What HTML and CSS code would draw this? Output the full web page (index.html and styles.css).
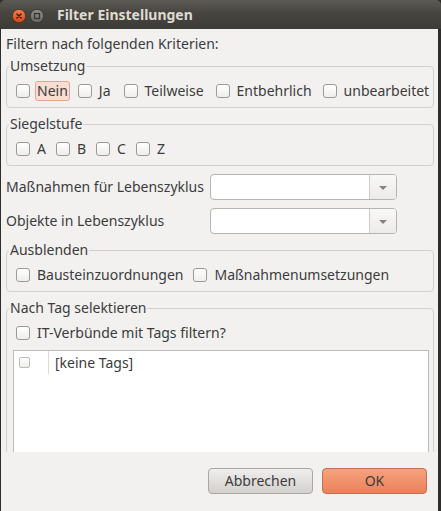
FILE: index.html
```html
<!DOCTYPE html>
<html lang="de">
<head>
<meta charset="utf-8">
<title>Filter Einstellungen</title>
<link rel="stylesheet" href="styles.css">
</head>
<body>
<div class="window">
  <div class="titlebar">
    <svg class="wbtn" width="14" height="14" viewBox="0 0 14 14">
      <defs><linearGradient id="og" x1="0" y1="0" x2="0" y2="1"><stop offset="0" stop-color="#f6814c"/><stop offset="1" stop-color="#d8461a"/></linearGradient></defs>
      <circle cx="7" cy="7" r="6.6" fill="url(#og)" stroke="#4a2a1a" stroke-width="0.7"/>
      <path d="M4.9 4.9 L9.1 9.1 M9.1 4.9 L4.9 9.1" stroke="#3a1a0c" stroke-width="1.4" stroke-linecap="round"/>
    </svg>
    <svg class="wbtn" width="14" height="14" viewBox="0 0 14 14">
      <defs><linearGradient id="gg" x1="0" y1="0" x2="0" y2="1"><stop offset="0" stop-color="#908e89"/><stop offset="1" stop-color="#6a6864"/></linearGradient></defs>
      <circle cx="7" cy="7" r="6.6" fill="url(#gg)" stroke="#2f2e2b" stroke-width="0.7"/>
      <rect x="4.5" y="4.5" width="5" height="5" fill="none" stroke="#33322f" stroke-width="1.2"/>
    </svg>
    <span class="title">Filter Einstellungen</span>
  </div>
  <div class="body">
    <div class="content">
      <div class="intro">Filtern nach folgenden Kriterien:</div>

      <fieldset class="frame f1">
        <legend>Umsetzung</legend>
        <div class="row wide">
          <div class="check"><span class="cb"></span><span class="lbl focus">Nein</span></div>
          <div class="check"><span class="cb"></span><span class="lbl">Ja</span></div>
          <div class="check"><span class="cb"></span><span class="lbl">Teilweise</span></div>
          <div class="check"><span class="cb"></span><span class="lbl">Entbehrlich</span></div>
          <div class="check"><span class="cb"></span><span class="lbl">unbearbeitet</span></div>
        </div>
      </fieldset>

      <fieldset class="frame">
        <legend>Siegelstufe</legend>
        <div class="row">
          <div class="check"><span class="cb"></span><span class="lbl">A</span></div>
          <div class="check"><span class="cb"></span><span class="lbl">B</span></div>
          <div class="check"><span class="cb"></span><span class="lbl">C</span></div>
          <div class="check"><span class="cb"></span><span class="lbl">Z</span></div>
        </div>
      </fieldset>

      <div class="combo-row first">
        <span class="combo-label">Maßnahmen für Lebenszyklus</span>
        <div class="combo"><span class="field"></span><span class="drop"><span class="arrow"></span></span></div>
      </div>
      <div class="combo-row">
        <span class="combo-label">Objekte in Lebenszyklus</span>
        <div class="combo"><span class="field"></span><span class="drop"><span class="arrow"></span></span></div>
      </div>

      <fieldset class="frame">
        <legend>Ausblenden</legend>
        <div class="row">
          <div class="check"><span class="cb"></span><span class="lbl">Bausteinzuordnungen</span></div>
          <div class="check"><span class="cb"></span><span class="lbl">Maßnahmenumsetzungen</span></div>
        </div>
      </fieldset>

      <fieldset class="frame tagframe">
        <legend>Nach Tag selektieren</legend>
        <div class="row">
          <div class="check"><span class="cb"></span><span class="lbl">IT-Verbünde mit Tags filtern?</span></div>
        </div>
        <div class="list">
          <div class="list-row">
            <div class="c1"><span class="cb small"></span></div>
            <div class="c2">[keine Tags]</div>
          </div>
        </div>
      </fieldset>
    </div>
    <div class="buttons">
      <button class="btn" type="button">Abbrechen</button>
      <button class="btn ok" type="button">OK</button>
    </div>
  </div>
</div>
</body>
</html>
```
FILE: styles.css
```css
* { box-sizing: border-box; }
html, body { margin: 0; padding: 0; }
body {
  width: 441px;
  height: 511px;
  overflow: hidden;
  background: #f2f1f0;
  font-family: "Noto Sans", "DejaVu Sans", sans-serif;
  font-size: 14px;
  color: #3c3c3c;
}
.window {
  width: 441px;
  height: 511px;
  display: flex;
  flex-direction: column;
  background: #2e2d2b;
}
.titlebar {
  height: 29px;
  flex: none;
  display: flex;
  align-items: center;
  padding-left: 12px;
  background: linear-gradient(#5b5a55, #46453f 45%, #3c3b37);
  border-radius: 5px 5px 0 0;
}
.wbtn { display: block; flex: none; margin-top: 2px; }
.wbtn + .wbtn { margin-left: 4px; }
.title {
  margin-left: 13px;
  font-weight: bold;
  color: #dfdbd2;
  line-height: 18px;
}
.body {
  flex: 1;
  display: flex;
  flex-direction: column;
  margin: 0 3px 0 1px;
  background: #f2f1f0;
}
.content {
  flex: none;
  height: 423px;
  overflow: hidden;
  padding: 6px 4px 0 5px;
}
.intro { line-height: 18px; }

.frame {
  margin: 7px 0 0;
  padding: 6px 0 6px 2px;
  border: 1px solid #d2d0cb;
  border-radius: 4px;
  min-width: 0;
}
.frame.f1 { margin-top: 4px; }
.frame legend {
  padding: 0 1px;
  line-height: 18px;
}
.row {
  display: flex;
  align-items: center;
  gap: 8px;
  height: 20px;
  padding-left: 7px;
}
.row.wide .check:nth-child(3) { margin-left: 3px; }
.row.wide .check:nth-child(4) { margin-left: 2px; }
.row.wide .check:nth-child(5) { margin-left: 1px; }
.check { display: flex; align-items: center; height: 20px; }
.cb {
  display: block;
  flex: none;
  width: 14px;
  height: 14px;
  border: 1px solid #9c9a95;
  border-radius: 3px;
  background: linear-gradient(#ffffff, #efeeec);
}
.lbl {
  margin-left: 5px;
  padding: 0 1px;
  border: 1px solid transparent;
  border-radius: 3px;
  line-height: 18px;
  white-space: nowrap;
}
.lbl.focus {
  background: #f5ded4;
  border-color: #e9a487;
}

.combo-row {
  display: grid;
  grid-template-columns: 204px 187px;
  align-items: center;
  height: 26px;
  margin-top: 8px;
}
.combo-label { line-height: 18px; white-space: nowrap; }
.combo {
  height: 26px;
  display: flex;
  border: 1px solid #b6b4af;
  border-radius: 4px;
  background: #fff;
  overflow: hidden;
}
.combo .field { flex: 1; }
.combo .drop {
  width: 27px;
  flex: none;
  border-left: 1px solid #cdcbc7;
  background: linear-gradient(#f8f8f7, #ecebe9);
  display: flex;
  align-items: center;
  justify-content: center;
}
.arrow {
  width: 0;
  height: 0;
  border-left: 4px solid transparent;
  border-right: 4px solid transparent;
  border-top: 4px solid #85837f;
  margin-top: 1px;
}

.list {
  margin: 7px 4px 0 4px;
  height: 150px;
  background: #fff;
  border: 1px solid #bdbbb7;
}
.list-row { display: flex; height: 23px; }
.list-row .c1 {
  width: 35px;
  border-right: 1px solid #dedcd8;
  padding: 6px 0 0 5px;
}
.cb.small {
  width: 11px;
  height: 11px;
  border-color: #bdbbb7;
  border-radius: 2px;
}
.list-row .c2 {
  padding-left: 6px;
  line-height: 23px;
}

.buttons {
  flex: 1;
  display: flex;
  justify-content: flex-end;
  gap: 9px;
  padding: 16px 11px 0 0;
}
.btn {
  width: 105px;
  height: 26px;
  padding: 0;
  border: 1px solid #a9a7a3;
  border-radius: 4px;
  background: linear-gradient(#efeeec, #d3d1ce);
  font-family: inherit;
  font-size: 14px;
  color: #3c3c3c;
  line-height: 24px;
  text-align: center;
}
.btn.ok {
  border-color: #c57150;
  background: linear-gradient(#f6a27f, #ea8159);
}
```
